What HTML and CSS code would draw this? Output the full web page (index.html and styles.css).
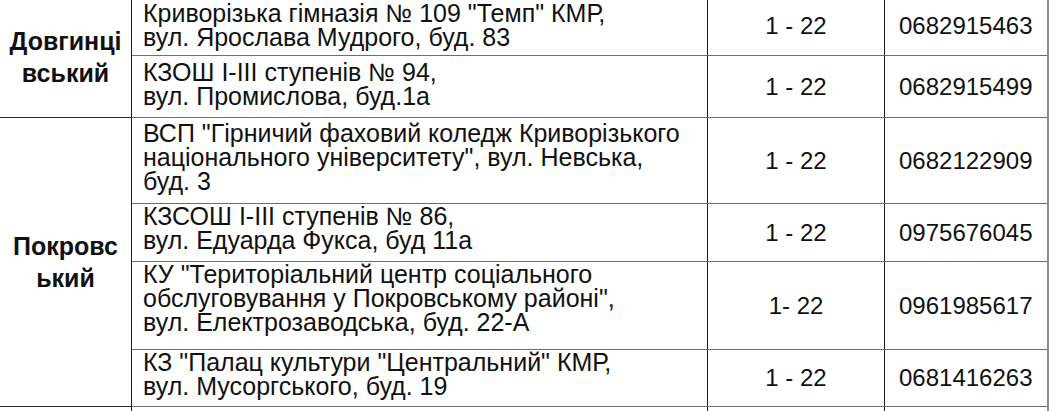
FILE: index.html
```html
<!DOCTYPE html>
<html lang="uk">
<head>
<meta charset="utf-8">
<title>Пункти</title>
<link rel="stylesheet" href="styles.css">
</head>
<body>
<div class="sheet">
<table class="schedule">
  <colgroup>
    <col class="c-district">
    <col class="c-address">
    <col class="c-age">
    <col class="c-phone">
  </colgroup>
  <tbody>
    <tr class="r1">
      <td class="district" rowspan="2">Довгинці<br>вський</td>
      <td class="address pad-a">Криворізька гімназія № 109 "Темп" КМР,<br>вул. Ярослава Мудрого, буд. 83</td>
      <td class="num">1 - 22</td>
      <td class="num phone">0682915463</td>
    </tr>
    <tr class="r2">
      <td class="address pad-a">КЗОШ І-ІІІ ступенів № 94,<br>вул. Промислова, буд.1а</td>
      <td class="num">1 - 22</td>
      <td class="num phone">0682915499</td>
    </tr>
    <tr class="r3">
      <td class="district" rowspan="4">Покровс<br>ький</td>
      <td class="address pad-b">ВСП "Гірничий фаховий коледж Криворізького<br>національного університету", вул. Невська,<br>буд. 3</td>
      <td class="num">1 - 22</td>
      <td class="num phone">0682122909</td>
    </tr>
    <tr class="r4">
      <td class="address pad-c">КЗСОШ І-ІІІ ступенів № 86,<br>вул. Едуарда Фукса, буд 11а</td>
      <td class="num">1 - 22</td>
      <td class="num phone">0975676045</td>
    </tr>
    <tr class="r5">
      <td class="address pad-c">КУ "Територіальний центр соціального<br>обслуговування у Покровському районі",<br>вул. Електрозаводська, буд. 22-А</td>
      <td class="num">1- 22</td>
      <td class="num phone">0961985617</td>
    </tr>
    <tr class="r6">
      <td class="address pad-c">КЗ "Палац культури "Центральний" КМР,<br>вул. Мусоргського, буд. 19</td>
      <td class="num">1 - 22</td>
      <td class="num phone">0681416263</td>
    </tr>
    <tr class="r7">
      <td class="district"></td>
      <td class="address"></td>
      <td class="num"></td>
      <td class="num phone"></td>
    </tr>
  </tbody>
</table>
</div>
</body>
</html>
```
FILE: styles.css
```css
html, body {
  margin: 0;
  padding: 0;
  background: #ffffff;
  overflow: hidden;
}

.sheet {
  margin-top: -4px;
  margin-left: -1px;
}

.schedule {
  border-collapse: collapse;
  table-layout: fixed;
  width: 1048px;
  font-family: "Liberation Sans", Arial, sans-serif;
  font-size: 24px;
  color: #111111;
}

.c-district { width: 132px; }
.c-address { width: 576px; }
.c-age { width: 177px; }
.c-phone { width: 163px; }

.schedule td {
  border-top: 1px solid #6e6e6e;
  border-bottom: 1px solid #6e6e6e;
  border-left: 1px solid #1c1c1c;
  border-right: 1px solid #1c1c1c;
  padding: 0;
  line-height: 24px;
}

.schedule td.district {
  border-top-color: #2a2a2a;
  border-bottom-color: #2a2a2a;
  font-size: 25px;
  font-weight: bold;
  text-align: center;
  vertical-align: middle;
  line-height: 32px;
}

.schedule td.address {
  font-size: 25px;
  vertical-align: top;
  padding-left: 11px;
  padding-right: 2px;
  white-space: nowrap;
}

.schedule td.pad-a { padding-top: 4px; }
.schedule td.pad-b { padding-top: 3px; }
.schedule td.pad-c { padding-top: 0; }

.schedule td.num {
  text-align: center;
  vertical-align: middle;
}

.schedule td.phone {
  border-right: 2px solid #8c8c8c;
}

.r1 { height: 59px; }
.r2 { height: 62px; }
.r3 { height: 86px; }
.r4 { height: 58px; }
.r5 { height: 88px; }
.r6 { height: 57px; }
.r7 { height: 40px; }
```
